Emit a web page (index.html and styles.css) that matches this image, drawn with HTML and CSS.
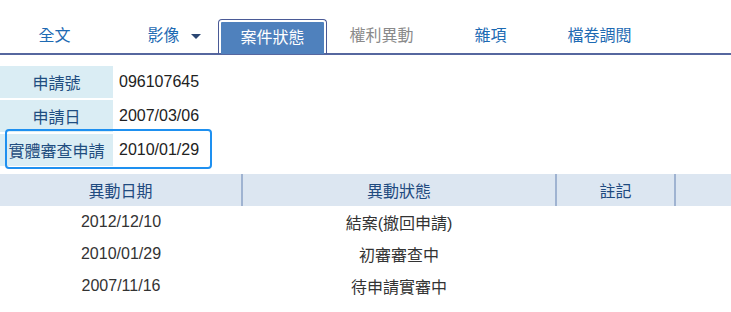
FILE: index.html
```html
<!DOCTYPE html>
<html lang="zh-Hant">
<head>
  <meta charset="UTF-8">
  <meta name="viewport" content="width=device-width, initial-scale=1.0">
  <title>案件狀態</title>
  <link rel="stylesheet" href="styles.css">
</head>
<body>
  <ul class="tabs">
    <li class="tab"><span class="tab-label">全文</span></li>
    <li class="tab"><span class="tab-label caret">影像</span></li>
    <li class="tab active"><span class="tab-label">案件狀態</span></li>
    <li class="tab disabled"><span class="tab-label">權利異動</span></li>
    <li class="tab"><span class="tab-label">雜項</span></li>
    <li class="tab"><span class="tab-label">檔卷調閱</span></li>
  </ul>

  <div class="info">
    <div class="info-row"><div class="info-label">申請號</div><div class="info-value">096107645</div></div>
    <div class="info-row"><div class="info-label">申請日</div><div class="info-value">2007/03/06</div></div>
    <div class="info-row focused"><div class="info-label">實體審查申請</div><div class="info-value">2010/01/29</div></div>
  </div>

  <table class="status-table">
    <colgroup>
      <col style="width: 242px">
      <col style="width: 314px">
      <col style="width: 119px">
      <col>
    </colgroup>
    <thead>
      <tr><th>異動日期</th><th>異動狀態</th><th>註記</th><th></th></tr>
    </thead>
    <tbody>
      <tr><td>2012/12/10</td><td>結案(撤回申請)</td><td></td><td></td></tr>
      <tr><td>2010/01/29</td><td>初審審查中</td><td></td><td></td></tr>
      <tr><td>2007/11/16</td><td>待申請實審中</td><td></td><td></td></tr>
    </tbody>
  </table>
</body>
</html>
```

FILE: styles.css
```css
body {
  margin: 0;
  font-family: "Liberation Sans", "Noto Sans CJK TC", sans-serif;
  font-size: 16px;
  color: #333;
  background: #fff;
}

/* tabs */
.tabs {
  list-style: none;
  margin: 0;
  padding: 19px 0 0;
  display: flex;
  border-bottom: 2px solid #56679f;
}

.tab {
  width: 109px;
  height: 34px;
  box-sizing: border-box;
  display: flex;
  align-items: center;
  justify-content: center;
  font-size: 16px;
  color: #1d6ab3;
}

.tab-label {
  position: relative;
  line-height: 20px;
}

.caret::after {
  content: '';
  position: absolute;
  left: calc(100% + 11px);
  top: 8px;
  border-left: 5px solid transparent;
  border-right: 5px solid transparent;
  border-top: 5px solid #2a4673;
}

.tab.disabled {
  color: #8a8a8a;
}

.tab.active {
  border: 1px solid #4a5a96;
  border-bottom: none;
  border-radius: 4px 4px 0 0;
  padding: 2px 2px 0;
  background: #4f81bd;
  background-clip: content-box;
  color: #fff;
  margin-bottom: -1px;
  height: 35px;
  position: relative;
  z-index: 1;
}

/* basic data */
.info {
  display: flex;
  flex-direction: column;
  gap: 2px;
  padding-top: 11px;
}

.info-row {
  display: flex;
  height: 32px;
  align-items: stretch;
  position: relative;
}

.info-label {
  width: 113px;
  background: #daedf4;
  color: #1f4d80;
  display: flex;
  align-items: center;
  justify-content: center;
}

.info-value {
  display: flex;
  align-items: center;
  padding-left: 6px;
  color: #222;
}

.info-row.focused::after {
  content: '';
  position: absolute;
  top: -5px;
  bottom: -3px;
  left: 5px;
  width: 207px;
  box-sizing: border-box;
  border: 2px solid #1e90f0;
  border-radius: 4px;
}

/* status history */
.status-table {
  width: 100%;
  margin-top: 8px;
  border-collapse: collapse;
  table-layout: fixed;
}

.status-table th {
  height: 32px;
  padding: 0;
  background: #dce6f1;
  color: #1f4a7f;
  font-weight: normal;
  border-left: 2px solid #9fb3d1;
}

.status-table th:first-child {
  border-left: none;
}

.status-table td {
  height: 32px;
  padding: 0;
  text-align: center;
  color: #333;
}
```
